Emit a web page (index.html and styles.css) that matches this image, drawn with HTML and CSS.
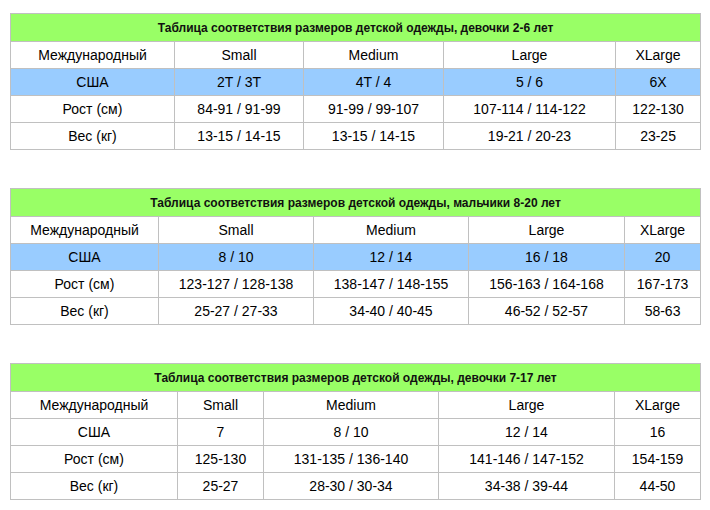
FILE: index.html
```html
<!DOCTYPE html>
<html lang="ru">
<head>
<meta charset="utf-8">
<title>Таблицы размеров</title>
<link rel="stylesheet" href="styles.css">
</head>
<body>
<div class="page">
  <table class="size-table t1">
    <colgroup><col class="c1"><col class="c2"><col class="c3"><col class="c4"><col class="c5"></colgroup>
    <tr><td class="title" colspan="5">Таблица соответствия размеров детской одежды, девочки 2-6 лет</td></tr>
    <tr><td>Международный</td><td>Small</td><td>Medium</td><td>Large</td><td>XLarge</td></tr>
    <tr class="us"><td>США</td><td>2T / 3T</td><td>4T / 4</td><td>5 / 6</td><td>6X</td></tr>
    <tr><td>Рост (см)</td><td>84-91 / 91-99</td><td>91-99 / 99-107</td><td>107-114 / 114-122</td><td>122-130</td></tr>
    <tr><td>Вес (кг)</td><td>13-15 / 14-15</td><td>13-15 / 14-15</td><td>19-21 / 20-23</td><td>23-25</td></tr>
  </table>

  <table class="size-table t2">
    <colgroup><col class="c1"><col class="c2"><col class="c3"><col class="c4"><col class="c5"></colgroup>
    <tr><td class="title" colspan="5">Таблица соответствия размеров детской одежды, мальчики 8-20 лет</td></tr>
    <tr><td>Международный</td><td>Small</td><td>Medium</td><td>Large</td><td>XLarge</td></tr>
    <tr class="us"><td>США</td><td>8 / 10</td><td>12 / 14</td><td>16 / 18</td><td>20</td></tr>
    <tr><td>Рост (см)</td><td>123-127 / 128-138</td><td>138-147 / 148-155</td><td>156-163 / 164-168</td><td>167-173</td></tr>
    <tr><td>Вес (кг)</td><td>25-27 / 27-33</td><td>34-40 / 40-45</td><td>46-52 / 52-57</td><td>58-63</td></tr>
  </table>

  <table class="size-table t3">
    <colgroup><col class="c1"><col class="c2"><col class="c3"><col class="c4"><col class="c5"></colgroup>
    <tr><td class="title" colspan="5">Таблица соответствия размеров детской одежды, девочки 7-17 лет</td></tr>
    <tr><td>Международный</td><td>Small</td><td>Medium</td><td>Large</td><td>XLarge</td></tr>
    <tr><td>США</td><td>7</td><td>8 / 10</td><td>12 / 14</td><td>16</td></tr>
    <tr><td>Рост (см)</td><td>125-130</td><td>131-135 / 136-140</td><td>141-146 / 147-152</td><td>154-159</td></tr>
    <tr><td>Вес (кг)</td><td>25-27</td><td>28-30 / 30-34</td><td>34-38 / 39-44</td><td>44-50</td></tr>
  </table>
</div>
</body>
</html>
```

FILE: styles.css
```css
html, body {
  margin: 0;
  padding: 0;
  background: #ffffff;
}

.page {
  padding: 13px 0 0 10px;
  font-family: "Liberation Sans", Arial, sans-serif;
  color: #000000;
}

.size-table {
  border-collapse: collapse;
  table-layout: fixed;
  width: 691px;
  margin: 0 0 38px 0;
}

.size-table:last-child {
  margin-bottom: 0;
}

.size-table td {
  border: 1px solid #c0c0c0;
  padding: 0;
  height: 26px;
  text-align: center;
  vertical-align: middle;
  font-size: 14px;
  line-height: 16px;
  white-space: nowrap;
}

.size-table td.title {
  background: #99ff66;
  height: 27px;
  font-size: 12px;
  font-weight: bold;
  color: #111111;
}

.size-table tr.us td {
  background: #99ccff;
}

.t1 .c1 { width: 164px; }
.t1 .c2 { width: 129px; }
.t1 .c3 { width: 140px; }
.t1 .c4 { width: 172px; }
.t1 .c5 { width: 85px; }

.t2 .c1 { width: 148px; }
.t2 .c2 { width: 155px; }
.t2 .c3 { width: 155px; }
.t2 .c4 { width: 156px; }
.t2 .c5 { width: 76px; }

.t3 .c1 { width: 167px; }
.t3 .c2 { width: 86px; }
.t3 .c3 { width: 175px; }
.t3 .c4 { width: 176px; }
.t3 .c5 { width: 86px; }
```
